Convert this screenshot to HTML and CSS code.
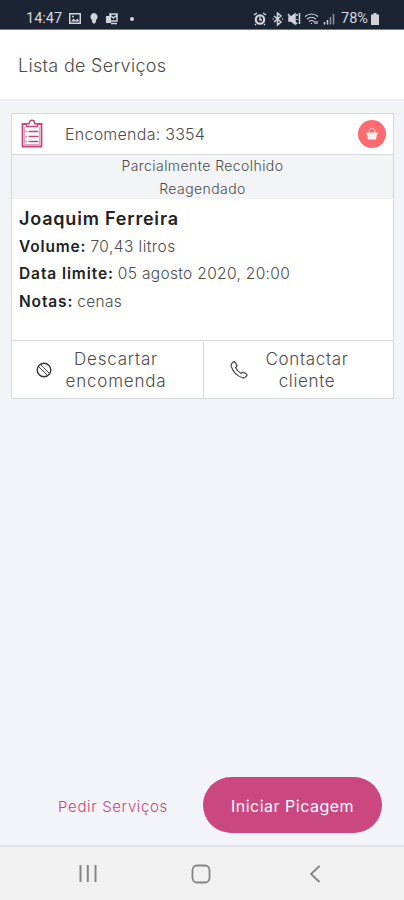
FILE: index.html
```html
<!DOCTYPE html>
<html lang="pt">
<head>
<meta charset="utf-8">
<title>Lista de Serviços</title>
<link rel="stylesheet" href="styles.css">
</head>
<body>
<div class="status">
  <span class="time">14:47</span>
  <svg class="left-icons" width="70" height="14" viewBox="0 0 70 14" fill="#cfd3da">
    <path fill-rule="evenodd" d="M1 1h12v11H1zM2.500 2.500v8h9v-8z"/><path d="M3 9.500l2.500-3 2 2 2-2 2 3z"/><circle cx="5" cy="4.500" r="1"/>
    <path d="M26 1a4 4 0 0 1 2 7.200V10l-2 2-2-2V8.200A4 4 0 0 1 26 1z"/>
    <path d="M38 4h5v7h-5z"/><path fill="none" stroke="#cfd3da" stroke-width="1.500" d="M42 2h7v7h-7zM42 3l3.500 3L49 3M43 11.500h6"/>
    <circle cx="64" cy="7" r="2"/>
  </svg>
  <svg class="right-icons" width="84" height="14" viewBox="0 0 84 14" fill="none" stroke="#cfd3da" stroke-width="1.500">
    <circle cx="7" cy="7.500" r="4.200" stroke-width="2.200"/><path d="M1 3l3-2M13 3l-3-2M7 5v3h2M3 12l-1 1M11 12l1 1"/>
    <path d="M21 4l7 6-3.500 3V1L28 4l-7 6M19.500 7h1M29 7h1"/>
    <path fill="#cfd3da" d="M36 5h2l4-3v10l-4-3h-2z"/><path d="M35 2l9 10M44 2v2M44 7v1M46.500 1v11"/>
    <path stroke-width="1.200" d="M52 4.500q6.500-5 13 0M54 7q4.500-3.500 9 0M56 9.500q2.500-2 5 0M58.500 11v1M62 9v3M64 9v3"/>
    <path d="M71.500 10v2.500M74.500 8v4.500" /><path stroke="#8a909c" d="M77.500 5v7.500M80.500 2v10.500"/>
  </svg>
  <span class="percent">78%</span>
  <svg class="battery" width="8" height="12" viewBox="0 0 8 12" fill="#cfd3da"><path d="M2.500 0h3v1.500H8V12H0V1.500h2.500z"/></svg>
</div>
<header class="appbar"><h1>Lista de Serviços</h1></header>
<main class="content">
  <article class="card">
    <div class="card-head">
      <svg class="clipboard" width="24" height="30" viewBox="0 0 24 30" fill="none" stroke="#c84580">
        <path stroke-width="1.800" d="M2.500 5h19v22.500h-19z"/>
        <path fill="#fff" stroke-width="1.400" d="M6.500 7.500V4.700h2.700q0-3.500 2.800-3.500t2.800 3.500h2.700v2.800z"/>
        <path stroke-width="1.500" d="M5.500 12.500h1.200M5.500 17.500h1.200M5.500 22.500h1.200M8.500 12.500h10M8.500 17.500h10M8.500 22.500h10"/>
        <path stroke-width=".5" d="M4.500 8v17.500h15V8"/>
      </svg>
      <span class="order">Encomenda: 3354</span>
      <span class="badge"><svg width="12" height="14" viewBox="0 0 12 14"><path fill="none" stroke="#ffc4c4" stroke-width="1" d="M3 6V4.200a3 3 0 0 1 6 0V6"/><path fill="#fff0ef" d="M.5 5.500h11v2.200h-.6L10 12.500H2L1.100 7.700H.5z"/></svg></span>
    </div>
    <div class="state"><div>Parcialmente Recolhido</div><div>Reagendado</div></div>
    <div class="details">
      <h2>Joaquim Ferreira</h2>
      <p><b>Volume:</b><span class="volume">70,43 litros</span></p>
      <p><b class="due">Data limite:</b><span>05 agosto 2020, 20:00</span></p>
      <p><b>Notas:</b><span>cenas</span></p>
    </div>
    <div class="actions">
      <div class="action discard">
        <svg width="16" height="16" viewBox="0 0 16 16" fill="none" stroke="#3a3a3a" stroke-width="1.400"><circle cx="8" cy="8" r="6.800"/><path stroke-width=".9" d="M4.700 2.700l8.600 8.600M2.700 4.700l8.600 8.600"/></svg>
        <span class="label">Descartar<br>encomenda</span>
      </div>
      <div class="action contact">
        <svg width="18" height="18" viewBox="0 0 18 18" fill="none" stroke="#444" stroke-width="1.200" stroke-linejoin="round"><path d="M1.500 2.800L3.300 1q1-.7 1.800.4l1.700 2.700q.5 1-.3 1.700l-1 .8q1.900 3.800 5.700 6l1-1q.7-.7 1.600-.2l2.700 1.700q.9.700.3 1.600l-1.600 1.700q-1 .8-2.700.4Q4 14 1.300 5.400 1 4 1.500 2.800z"/></svg>
        <span class="label">Contactar<br>cliente</span>
      </div>
    </div>
  </article>
</main>
<footer class="bottom">
  <span class="request">Pedir Serviços</span>
  <span class="start"><span>Iniciar Picagem</span></span>
</footer>
<nav class="nav">
  <svg width="18" height="18" viewBox="0 0 18 18" stroke="#858585" stroke-width="2" fill="none"><path d="M1.500 0v17M8.800 0v17M16.500 0v17"/></svg>
  <svg width="20" height="20" viewBox="0 0 20 20" stroke="#858585" stroke-width="1.800" fill="none"><rect x="1.500" y="1.500" width="17" height="17" rx="4.500"/></svg>
  <svg width="12" height="18" viewBox="0 0 12 18" stroke="#858585" stroke-width="1.800" fill="none"><path d="M10.500 1L2 9l8.500 8"/></svg>
</nav>
</body>
</html>
```
FILE: styles.css
```css
* { box-sizing: border-box; }
body { margin: 0; width: 404px; height: 900px; display: flex; flex-direction: column; background: #f2f4f7; color: #4c4c4c; font-family: Inter, "Open Sans", sans-serif; font-weight: 300; overflow: hidden; white-space: nowrap; }
h1, h2, p { margin: 0; }
svg { display: block; flex: none; }
.status { height: 30px; flex: none; background: #1c2433; border-bottom: 1px solid #777b85; display: flex; align-items: center; padding: 8px 0 0 26px; color: #d5d8de; font-family: Roboto, sans-serif; font-size: 14.5px; font-weight: 400; }
.time { width: 42px; }
.right-icons { margin-left: 115px; }
.percent { margin-left: 4px; width: 29px; font-size: 14.5px; }
.battery { margin-left: 1px; }
.appbar { height: 71px; flex: none; background: #fff; border-bottom: 2px solid #eceff1; padding: 2px 18px 0; display: flex; align-items: center; }
h1 { font-size: 18px; font-weight: 300; letter-spacing: .3px; }
.content { flex: 1; padding: 12px 10px 0 11px; }
.card { height: 286px; background: #fff; border: 1px solid #d5d9dc; display: flex; flex-direction: column; }
.card-head { height: 41px; border-bottom: 1px solid #d5d9dc; display: flex; align-items: center; padding: 0 7px 0 8px; }
.order { margin-left: 21px; font-size: 16px; letter-spacing: .25px; }
.badge { margin-left: auto; width: 28px; height: 28px; border-radius: 50%; background: #fb6b70; display: grid; place-items: center; }
.state { height: 44px; background: #f2f4f6; text-align: center; font-size: 14px; line-height: 22.500px; letter-spacing: .43px; }
.details { height: 141px; padding: 6px 6px 0 7px; font-size: 15.5px; line-height: 27.300px; letter-spacing: .33px; }
h2 { color: #222; font-size: 18px; font-weight: 600; line-height: 27.500px; letter-spacing: .8px; }
p { position: relative; top: .7px; }
b { color: #222; font-weight: 600; letter-spacing: .85px; margin-right: 4px; }
b.due { letter-spacing: .9px; }
.volume { letter-spacing: .45px; }
.actions { flex: 1; border-top: 1px solid #d5d9dc; display: flex; padding-top: 1px; }
.action { display: flex; align-items: center; font-size: 17px; line-height: 22px; text-align: center; }
.discard { width: 192px; border-right: 1px solid #d5d9dc; padding-left: 24px; }
.discard .label { width: 104px; margin-left: 12px; letter-spacing: .8px; }
.contact { padding-left: 26px; }
.contact .label { width: 84px; margin-left: 17px; letter-spacing: .65px; }
.bottom { height: 79px; display: flex; justify-content: flex-end; padding: 11px 22px 12px 0; align-items: center; }
.request { color: #c84580; font-size: 15px; letter-spacing: .65px; margin-right: 35px; padding-top: 2px; }
.start { width: 179px; height: 56px; border-radius: 28px; background: #ca477f; color: #fff; font-size: 16px; letter-spacing: .5px; display: grid; place-items: center; padding-top: 1px; font-weight: 400; }
.nav { height: 55px; background: #f1f1f1; border-top: 2px solid #e1e4e6; display: flex; align-items: center; padding: 1px 0 0 79px; }
.nav svg:nth-child(2) { margin-left: 94px; }
.nav svg:nth-child(3) { margin-left: 98px; }
```
